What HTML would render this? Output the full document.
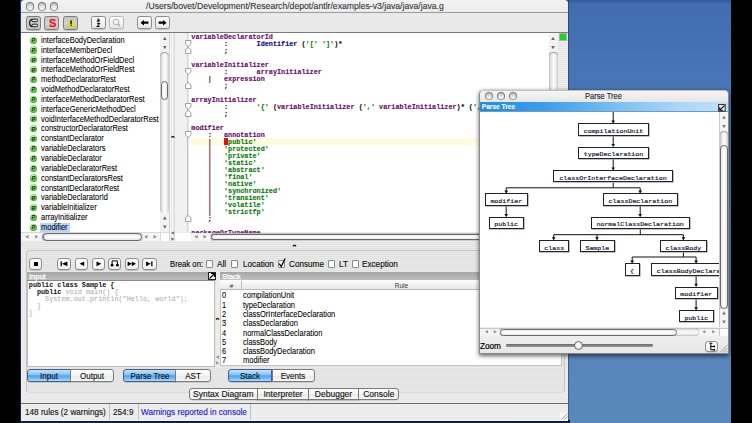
<!DOCTYPE html><html><head><meta charset="utf-8"><style>
*{margin:0;padding:0;box-sizing:border-box}
html,body{width:752px;height:423px;overflow:hidden;background:#000;position:relative;font-family:"Liberation Sans",sans-serif}
.a{position:absolute}
.t{position:absolute;white-space:pre;line-height:1}
.mono{font-family:"Liberation Mono",monospace}
.tl{position:absolute;width:8.4px;height:8.4px;border-radius:50%;border:1px solid #7c7c7c;border-bottom-color:#9a9a9a;background:linear-gradient(#bdbdbd,#d8d8d8 40%,#f4f4f4 75%,#fff)}
.tb{position:absolute;border:1px solid #8c8c8c;border-radius:2.5px;background:linear-gradient(#fdfdfd,#f2f2f2 60%,#e6e6e6);box-shadow:0 0.7px 0.5px rgba(0,0,0,.2)}
.tbp{position:absolute;border:1px solid #7c7c7c;border-radius:2.5px;background:linear-gradient(#c4c4c4,#d2d2d2 50%,#c0c0c0);box-shadow:0 0.7px 0.5px rgba(0,0,0,.2)}
.vtrack{position:absolute;background:linear-gradient(90deg,#c4c4c4,#e8e8e8 25%,#fcfcfc 50%,#f0f0f0 75%,#cfcfcf);box-shadow:inset 0 1.5px 1px -0.5px rgba(0,0,0,.35)}
.htrack{position:absolute;background:linear-gradient(#c4c4c4,#e8e8e8 25%,#fcfcfc 50%,#f0f0f0 75%,#cfcfcf);box-shadow:inset 0 0 1.2px rgba(0,0,0,.45)}
.thumb{position:absolute;border:1px solid #6a6a6a;border-radius:4px;background:linear-gradient(90deg,#eaeaea,#fff 50%,#e6e6e6)}
.hthumb{position:absolute;border:1px solid #6a6a6a;border-radius:4px;background:linear-gradient(#eaeaea,#fff 50%,#e6e6e6)}
.li{position:absolute;left:40.8px;font-size:8.6px;color:#000;white-space:pre;line-height:1;-webkit-text-stroke:0.08px #000;transform:scaleX(0.87);transform-origin:0 0}
.gi{position:absolute;left:30px;width:7.2px;height:7.2px;border-radius:50%;background:radial-gradient(circle at 45% 30%,#e0ffd0 0%,#7ee060 35%,#3cb82a 70%,#2a9a1c 100%)}
.btn{position:absolute;border:1px solid #8e8e8e;border-radius:3px;background:linear-gradient(#fff,#f0f0f0);box-shadow:0 0.6px 0.6px rgba(0,0,0,.25)}
.ui{position:absolute;white-space:pre;line-height:1;font-size:8.4px;color:#111;transform-origin:0 0}
.cb{position:absolute;width:7.4px;height:7.4px;border:1px solid #8a8a8a;border-radius:1px;background:linear-gradient(#f4f4f4,#fff)}
.seg{position:absolute;border:1px solid #7a7a7a;background:linear-gradient(#fdfdfd,#f4f4f4 50%,#e9e9e9 55%,#f8f8f8);box-shadow:0 0.6px 0.6px rgba(0,0,0,.2)}
.segb{position:absolute;border:1px solid #4a5f80;background:linear-gradient(#c4e2fb,#84c2f6 45%,#4aa4f2 52%,#6cbaf6 75%,#b0dcfc);box-shadow:0 0.6px 0.6px rgba(0,0,0,.25)}
.gi b{position:absolute;left:1.8px;top:0.6px;font:bold 5.5px "Liberation Sans";color:#111}
</style></head><body>
<div class="a" style="left:20px;top:0px;width:711px;height:423px;background:linear-gradient(#34589a 0px,#416cb0 4px,#4571b3 40px,#4a77b6 100px,#5381b9 250px,#5b88bb 423px)"></div>
<div class="a" style="left:20px;top:0px;width:1.2px;height:423px;background:linear-gradient(#203a70,#1a2c58 30%,#14224a)"></div>
<div class="a" style="left:20px;top:420px;width:550px;height:3px;background:linear-gradient(#000614 0%,#06112a 45%,#1c3564 100%)"></div>
<div class="a" style="left:568px;top:0px;width:1.2px;height:421px;background:linear-gradient(90deg,rgba(0,0,20,.5),rgba(0,0,20,.15))"></div>
<div class="a" style="left:21px;top:0px;width:547px;height:420.6px;background:repeating-linear-gradient(#ededed 0 1px,#e7e7e7 1px 2px);border-radius:4px 4px 0 0"></div>
<div class="a" style="left:21px;top:0px;width:547px;height:12.2px;background:repeating-linear-gradient(rgba(255,255,255,.25) 0 1px,rgba(0,0,0,0) 1px 2px),linear-gradient(#f0f0f0,#e8e8e8);border-radius:4.5px 4.5px 0 0"></div>
<div class="a" style="left:21px;top:12px;width:547px;height:1px;background:#9a9a9a"></div>
<div class="tl" style="left:25.7px;top:2.2px"></div>
<div class="tl" style="left:37.9px;top:2.2px"></div>
<div class="tl" style="left:50.099999999999994px;top:2.2px"></div>
<div class="t" style="left:146px;top:1.2px;font-size:9.8px;color:#333;-webkit-text-stroke-width:0.1px;transform:scaleX(0.882);transform-origin:0 0">/Users/bovet/Development/Research/depot/antlr/examples-v3/java/java/java.g</div>
<div class="a" style="left:21px;top:13px;width:547px;height:19px;background:repeating-linear-gradient(#ededed 0 1px,#e5e5e5 1px 2px)"></div>
<div class="a" style="left:21px;top:31.5px;width:547px;height:1.5px;background:#7a7a7a"></div>
<div class="tbp" style="left:26px;top:16px;width:15px;height:13.5px;"></div>
<svg class="a" style="left:26px;top:16px" width="15" height="14" viewBox="0 0 15 14"><rect x="5.8" y="3.2" width="5.9" height="2.5" rx="1.25" fill="#e8e8e8" stroke="#111" stroke-width="0.95"/><rect x="5.8" y="8.2" width="5.9" height="2.5" rx="1.25" fill="#e8e8e8" stroke="#111" stroke-width="0.95"/><path d="M6.3 3.3 Q3.6 3.7 3.6 6.95 Q3.6 10.2 6.3 10.6" fill="none" stroke="#111" stroke-width="1.1"/></svg>
<div class="tbp" style="left:44.3px;top:16px;width:15.2px;height:13.5px;"></div>
<div class="t" style="left:48.6px;top:17.2px;font:bold 10.6px 'Liberation Sans';color:#f00;transform:scaleX(1.05);transform-origin:0 0">S</div>
<div class="tbp" style="left:63px;top:16px;width:15px;height:13.5px;"></div>
<svg class="a" style="left:63px;top:16px" width="15" height="14" viewBox="0 0 15 14"><path d="M8.1 3.9 L12.5 10.4 H3.7 Z" fill="#f4f000" stroke="#a8a000" stroke-width="0.3"/><path d="M8.1 4.6 V8.4" stroke="#111" stroke-width="1.5"/><path d="M8.1 9 V10" stroke="#111" stroke-width="1.2"/></svg>
<div class="tb" style="left:90.8px;top:15.8px;width:15.2px;height:13.4px;"></div>
<svg class="a" style="left:0;top:0;overflow:visible" width="1" height="1"><path d="M97.2 19.1 H99.1 V21.8 H97.7 Q97.1 21.8 97.1 21.1 Q97.1 20.4 97.7 20.4 H99.1" fill="none" stroke="#111" stroke-width="0.95"/><path d="M97.1 23.5 H99.5 L97.2 26.4 H99.7" fill="none" stroke="#111" stroke-width="1.05"/></svg>
<div class="tb" style="left:109.2px;top:15.8px;width:15.2px;height:13.4px;border-color:#b8b8b8;box-shadow:0 0.7px 0.5px rgba(0,0,0,.1)"></div>
<svg class="a" style="left:109px;top:16px" width="15" height="14" viewBox="0 0 15 14"><circle cx="7" cy="6" r="2.8" fill="none" stroke="#b0b0b0" stroke-width="1"/><path d="M9 8 L11 10.3" stroke="#a8a8a8" stroke-width="1.4"/></svg>
<div class="tb" style="left:136.6px;top:15.8px;width:15.2px;height:13.4px;"></div>
<svg class="a" style="left:136.6px;top:15.8px" width="15" height="14" viewBox="0 0 15 14"><path d="M3.4 6.7 L7 3.9 V5.6 H11.4 V7.8 H7 V9.5 Z" fill="#000"/></svg>
<div class="tb" style="left:155px;top:15.8px;width:15.2px;height:13.4px;"></div>
<svg class="a" style="left:155px;top:15.8px" width="15" height="14" viewBox="0 0 15 14"><path d="M11.6 6.7 L8 3.9 V5.6 H3.6 V7.8 H8 V9.5 Z" fill="#000"/></svg>
<div class="a" style="left:21px;top:33px;width:139.5px;height:199px;background:#fff"></div>
<div class="gi" style="top:36.50px"><b>P</b></div>
<div class="li" style="top:35.80px">interfaceBodyDeclaration</div>
<div class="gi" style="top:46.35px"><b>P</b></div>
<div class="li" style="top:45.65px">interfaceMemberDecl</div>
<div class="gi" style="top:56.20px"><b>P</b></div>
<div class="li" style="top:55.50px">interfaceMethodOrFieldDecl</div>
<div class="gi" style="top:66.05px"><b>P</b></div>
<div class="li" style="top:65.35px">interfaceMethodOrFieldRest</div>
<div class="gi" style="top:75.90px"><b>P</b></div>
<div class="li" style="top:75.20px">methodDeclaratorRest</div>
<div class="gi" style="top:85.75px"><b>P</b></div>
<div class="li" style="top:85.05px">voidMethodDeclaratorRest</div>
<div class="gi" style="top:95.60px"><b>P</b></div>
<div class="li" style="top:94.90px">interfaceMethodDeclaratorRest</div>
<div class="gi" style="top:105.45px"><b>P</b></div>
<div class="li" style="top:104.75px">interfaceGenericMethodDecl</div>
<div class="gi" style="top:115.30px"><b>P</b></div>
<div class="li" style="top:114.60px">voidInterfaceMethodDeclaratorRest</div>
<div class="gi" style="top:125.15px"><b>P</b></div>
<div class="li" style="top:124.45px">constructorDeclaratorRest</div>
<div class="gi" style="top:135.00px"><b>P</b></div>
<div class="li" style="top:134.30px">constantDeclarator</div>
<div class="gi" style="top:144.85px"><b>P</b></div>
<div class="li" style="top:144.15px">variableDeclarators</div>
<div class="gi" style="top:154.70px"><b>P</b></div>
<div class="li" style="top:154.00px">variableDeclarator</div>
<div class="gi" style="top:164.55px"><b>P</b></div>
<div class="li" style="top:163.85px">variableDeclaratorRest</div>
<div class="gi" style="top:174.40px"><b>P</b></div>
<div class="li" style="top:173.70px">constantDeclaratorsRest</div>
<div class="gi" style="top:184.25px"><b>P</b></div>
<div class="li" style="top:183.55px">constantDeclaratorRest</div>
<div class="gi" style="top:194.10px"><b>P</b></div>
<div class="li" style="top:193.40px">variableDeclaratorId</div>
<div class="gi" style="top:203.95px"><b>P</b></div>
<div class="li" style="top:203.25px">variableInitializer</div>
<div class="gi" style="top:213.80px"><b>P</b></div>
<div class="li" style="top:213.10px">arrayInitializer</div>
<div class="a" style="left:40px;top:222.55px;width:30px;height:9.6px;background:#b5d5ff"></div>
<div class="gi" style="top:223.65px"><b>P</b></div>
<div class="li" style="top:222.95px">modifier</div>
<div class="a" style="left:160.4px;top:33px;width:8.8px;height:199px;background:#f2f2f2"></div>
<svg class="a" style="left:0;top:0;overflow:visible" width="1" height="1"><path d="M163.00 39.94 L166.60 39.94 L164.80 36.70 Z" fill="#666"/></svg>
<svg class="a" style="left:0;top:0;overflow:visible" width="1" height="1"><path d="M163.00 45.96 L166.60 45.96 L164.80 49.20 Z" fill="#666"/></svg>
<div class="vtrack" style="left:160.4px;top:52px;width:8.8px;height:161.5px;border-radius:4.4px"></div>
<div class="thumb" style="left:161.4px;top:80.5px;width:7.1px;height:19px"></div>
<svg class="a" style="left:0;top:0;overflow:visible" width="1" height="1"><path d="M163.00 219.44 L166.60 219.44 L164.80 216.20 Z" fill="#666"/></svg>
<svg class="a" style="left:0;top:0;overflow:visible" width="1" height="1"><path d="M163.00 225.56 L166.60 225.56 L164.80 228.80 Z" fill="#666"/></svg>
<div class="a" style="left:21px;top:232px;width:148.2px;height:9px;background:#f4f4f4;border-top:0.8px solid #d8d8d8"></div>
<svg class="a" style="left:0;top:0;overflow:visible" width="1" height="1"><path d="M28.44 235.00 L28.44 238.60 L25.20 236.80 Z" fill="#888"/></svg>
<svg class="a" style="left:0;top:0;overflow:visible" width="1" height="1"><path d="M35.16 235.00 L35.16 238.60 L38.40 236.80 Z" fill="#888"/></svg>
<div class="htrack" style="left:42px;top:233px;width:100.5px;height:7.9px;border-radius:4px"></div>
<div class="hthumb" style="left:42.6px;top:233px;width:99px;height:7.9px;box-shadow:-1.5px 0 0 -0.5px #888"></div>
<svg class="a" style="left:0;top:0;overflow:visible" width="1" height="1"><path d="M147.44 235.00 L147.44 238.60 L144.20 236.80 Z" fill="#888"/></svg>
<svg class="a" style="left:0;top:0;overflow:visible" width="1" height="1"><path d="M153.56 235.00 L153.56 238.60 L156.80 236.80 Z" fill="#888"/></svg>
<div class="a" style="left:160.4px;top:232px;width:8.8px;height:9px;background:#fff;border-left:0.8px solid #d8d8d8;border-top:0.8px solid #d8d8d8"></div>
<div class="a" style="left:169.2px;top:33px;width:6px;height:208px;background:repeating-linear-gradient(90deg,#f6f6f6 0 1px,#e8e8e8 1px 2px);border-left:0.8px solid #d4d4d4;border-right:0.6px solid #dcdcdc"></div>
<svg class="a" style="left:0;top:0;overflow:visible" width="1" height="1"><path d="M171.40 137.60 Q172.90 135.20 174.40 137.60" fill="none" stroke="#111" stroke-width="1.3"/></svg>
<svg class="a" style="left:0;top:0;overflow:visible" width="1" height="1"><path d="M174.14 231.20 L174.14 234.80 L170.90 233.00 Z" fill="#777"/></svg>
<svg class="a" style="left:0;top:0;overflow:visible" width="1" height="1"><path d="M171.26 237.20 L171.26 240.80 L174.50 239.00 Z" fill="#777"/></svg>
<div class="a" style="left:175.2px;top:33px;width:12.3px;height:199px;background:#f1f1f1"></div>
<div class="a" style="left:187.3px;top:33px;width:1px;height:199px;background:#d6d6d6"></div>
<div class="a" style="left:188.5px;top:33px;width:360px;height:199px;background:#fff"></div>
<div class="a" style="left:190.5px;top:138.1px;width:357.5px;height:6.8px;background:#fdfce0"></div>
<div class="a" style="left:224px;top:138.1px;width:4px;height:6.6px;background:#ee0a0a"></div>
<div class="t mono" style="left:191.3px;top:34.0px;font-size:6.8px;line-height:6.98px;font-weight:bold;-webkit-text-stroke-width:0.15px;color:#111"><span style="color:#6e0e70">variableDeclaratorId</span>
        <span style="color:#111">:</span>       <span style="color:#101080">Identifier</span> <span style="color:#111">(</span><span style="color:#0b7d0b">'['</span> <span style="color:#0b7d0b">']'</span><span style="color:#111">)*</span>
        <span style="color:#111">;</span>

<span style="color:#6e0e70">variableInitializer</span>
        <span style="color:#111">:</span>       <span style="color:#6e0e70">arrayInitializer</span>
    <span style="color:#7a2a44">|</span>   <span style="color:#6e0e70">expression</span>
        <span style="color:#111">;</span>

<span style="color:#6e0e70">arrayInitializer</span>
        <span style="color:#111">:</span>       <span style="color:#0b7d0b">'{'</span> <span style="color:#111">(</span><span style="color:#6e0e70">variableInitializer</span> <span style="color:#111">(</span><span style="color:#0b7d0b">','</span> <span style="color:#6e0e70">variableInitializer</span><span style="color:#111">)*</span> <span style="color:#111">(</span><span style="color:#0b7d0b">','</span><span style="color:#111">)?</span> <span style="color:#111">)?</span> <span style="color:#0b7d0b">'}'</span>
        <span style="color:#111">;</span>

<span style="color:#6e0e70">modifier</span>
    <span style="color:#111">:</span>   <span style="color:#6e0e70">annotation</span>
    <span style="color:#7a2a44">|</span>   <span style="color:#0b7d0b">'public'</span>
    <span style="color:#7a2a44">|</span>   <span style="color:#0b7d0b">'protected'</span>
    <span style="color:#7a2a44">|</span>   <span style="color:#0b7d0b">'private'</span>
    <span style="color:#7a2a44">|</span>   <span style="color:#0b7d0b">'static'</span>
    <span style="color:#7a2a44">|</span>   <span style="color:#0b7d0b">'abstract'</span>
    <span style="color:#7a2a44">|</span>   <span style="color:#0b7d0b">'final'</span>
    <span style="color:#7a2a44">|</span>   <span style="color:#0b7d0b">'native'</span>
    <span style="color:#7a2a44">|</span>   <span style="color:#0b7d0b">'synchronized'</span>
    <span style="color:#7a2a44">|</span>   <span style="color:#0b7d0b">'transient'</span>
    <span style="color:#7a2a44">|</span>   <span style="color:#0b7d0b">'volatile'</span>
    <span style="color:#7a2a44">|</span>   <span style="color:#0b7d0b">'strictfp'</span>
    <span style="color:#111">;</span>

<span style="color:#6e0e70">packageOrTypeName</span></div>
<div class="a" style="left:187.3px;top:45.85px;width:0.8px;height:2.25px;background:#c0c0c0"></div>
<svg class="a" style="left:184.5px;top:39.85px" width="7" height="7" viewBox="0 0 7 7"><path d="M0.5 0.5 H6 V3.9 L3.25 6.5 L0.5 3.9 Z" fill="#fff" stroke="#8c8c8c" stroke-width="0.8"/></svg>
<svg class="a" style="left:184.5px;top:47.10px" width="7" height="7" viewBox="0 0 7 7"><path d="M0.5 6.5 H6 V2.8 L3.25 0.5 L0.5 2.8 Z" fill="#fff" stroke="#8c8c8c" stroke-width="0.8"/></svg>
<div class="a" style="left:187.3px;top:73.77000000000001px;width:0.8px;height:9.22999999999999px;background:#c0c0c0"></div>
<svg class="a" style="left:184.5px;top:67.77px" width="7" height="7" viewBox="0 0 7 7"><path d="M0.5 0.5 H6 V3.9 L3.25 6.5 L0.5 3.9 Z" fill="#fff" stroke="#8c8c8c" stroke-width="0.8"/></svg>
<svg class="a" style="left:184.5px;top:82.00px" width="7" height="7" viewBox="0 0 7 7"><path d="M0.5 6.5 H6 V2.8 L3.25 0.5 L0.5 2.8 Z" fill="#fff" stroke="#8c8c8c" stroke-width="0.8"/></svg>
<div class="a" style="left:187.3px;top:108.67000000000002px;width:0.8px;height:2.249999999999986px;background:#c0c0c0"></div>
<svg class="a" style="left:184.5px;top:102.67px" width="7" height="7" viewBox="0 0 7 7"><path d="M0.5 0.5 H6 V3.9 L3.25 6.5 L0.5 3.9 Z" fill="#fff" stroke="#8c8c8c" stroke-width="0.8"/></svg>
<svg class="a" style="left:184.5px;top:109.92px" width="7" height="7" viewBox="0 0 7 7"><path d="M0.5 6.5 H6 V2.8 L3.25 0.5 L0.5 2.8 Z" fill="#fff" stroke="#8c8c8c" stroke-width="0.8"/></svg>
<div class="a" style="left:187.3px;top:136.59px;width:0.8px;height:79.03px;background:#c0c0c0"></div>
<svg class="a" style="left:184.5px;top:130.59px" width="7" height="7" viewBox="0 0 7 7"><path d="M0.5 0.5 H6 V3.9 L3.25 6.5 L0.5 3.9 Z" fill="#fff" stroke="#8c8c8c" stroke-width="0.8"/></svg>
<svg class="a" style="left:184.5px;top:214.62px" width="7" height="7" viewBox="0 0 7 7"><path d="M0.5 6.5 H6 V2.8 L3.25 0.5 L0.5 2.8 Z" fill="#fff" stroke="#8c8c8c" stroke-width="0.8"/></svg>
<div class="a" style="left:548.5px;top:33px;width:9.2px;height:199px;background:#f2f2f2"></div>
<svg class="a" style="left:0;top:0;overflow:visible" width="1" height="1"><path d="M551.20 39.94 L554.80 39.94 L553.00 36.70 Z" fill="#666"/></svg>
<svg class="a" style="left:0;top:0;overflow:visible" width="1" height="1"><path d="M551.20 45.96 L554.80 45.96 L553.00 49.20 Z" fill="#666"/></svg>
<div class="vtrack" style="left:548.5px;top:52px;width:9.2px;height:180px;border-radius:4px 4px 0 0"></div>
<div class="a" style="left:557.7px;top:33px;width:10.3px;height:208px;background:repeating-linear-gradient(#f0f0f0 0 1px,#e4e4e4 1px 2px)"></div>
<div class="a" style="left:559px;top:33.2px;width:8px;height:7.6px;background:#10e010;border:1px solid #c8a0c8"></div>
<div class="a" style="left:188.5px;top:232.9px;width:369.2px;height:8.1px;background:#f4f4f4"></div>
<div class="a" style="left:175.2px;top:232.9px;width:16px;height:8.1px;background:#fff"></div>
<svg class="a" style="left:0;top:0;overflow:visible" width="1" height="1"><path d="M197.54 235.00 L197.54 238.60 L194.30 236.80 Z" fill="#888"/></svg>
<svg class="a" style="left:0;top:0;overflow:visible" width="1" height="1"><path d="M203.46 235.00 L203.46 238.60 L206.70 236.80 Z" fill="#888"/></svg>
<div class="htrack" style="left:210px;top:233px;width:347px;height:7.6px;border-radius:4px 0 0 4px"></div>
<div class="hthumb" style="left:211px;top:233.5px;width:346px;height:6.8px;border-right:none;border-radius:4px 0 0 4px"></div>
<div class="a" style="left:21px;top:241px;width:547px;height:9px;background:repeating-linear-gradient(#ececec 0 1px,#e2e2e2 1px 2px)"></div>
<svg class="a" style="left:0;top:0;overflow:visible" width="1" height="1"><path d="M293.00 246.30 Q294.50 243.90 296.00 246.30" fill="none" stroke="#111" stroke-width="1.3"/></svg>
<div class="a" style="left:25.6px;top:250.4px;width:539px;height:142.2px;border:1px solid #c4c4c4;border-bottom-color:#dcdcdc;border-radius:4px;background:repeating-linear-gradient(#e8e8e8 0 1px,#e2e2e2 1px 2px)"></div>
<div class="btn" style="left:29.2px;top:258.3px;width:13px;height:11.4px;"></div>
<div class="a" style="left:33.5px;top:261.7px;width:4.4px;height:4.3px;background:#000"></div>
<div class="btn" style="left:57.3px;top:258.3px;width:13.600000000000009px;height:11.4px;"></div>
<div class="btn" style="left:74.7px;top:258.3px;width:13.299999999999997px;height:11.4px;"></div>
<div class="btn" style="left:91.6px;top:258.3px;width:13.600000000000009px;height:11.4px;"></div>
<div class="btn" style="left:108.3px;top:258.3px;width:13.200000000000003px;height:11.4px;"></div>
<div class="btn" style="left:124.9px;top:258.3px;width:13.699999999999989px;height:11.4px;"></div>
<div class="btn" style="left:142.1px;top:258.3px;width:14.700000000000017px;height:11.4px;"></div>
<svg class="a" style="left:57.3px;top:258.3px" width="14" height="12" viewBox="0 0 14 12"><rect x="3.6" y="3.4" width="1.3" height="4.8" fill="#000"/><path d="M10.4 3.4 V8.2 L4.9 5.8 Z" fill="#000"/></svg>
<svg class="a" style="left:74.7px;top:258.3px" width="14" height="12" viewBox="0 0 14 12"><path d="M9.2 3.6 V8.0 L4.6 5.8 Z" fill="#000"/></svg>
<svg class="a" style="left:91.6px;top:258.3px" width="14" height="12" viewBox="0 0 14 12"><path d="M4.5 3.4 V8.2 L9.3 5.8 Z" fill="#000"/></svg>
<svg class="a" style="left:108.3px;top:258.3px" width="14" height="12" viewBox="0 0 14 12"><path d="M4.1 6.9 V2.9 H9.4 V6.9" fill="none" stroke="#000" stroke-width="1"/><circle cx="4.1" cy="7.2" r="1.4" fill="#000"/><circle cx="9.4" cy="7.2" r="1.4" fill="#000"/></svg>
<svg class="a" style="left:124.9px;top:258.3px" width="14" height="12" viewBox="0 0 14 12"><path d="M2.6 3.4 V8.2 L6.8 5.8 Z M6.8 3.4 V8.2 L11 5.8 Z" fill="#000"/></svg>
<svg class="a" style="left:142.1px;top:258.3px" width="15" height="12" viewBox="0 0 15 12"><path d="M4 3.4 V8.2 L8.8 5.8 Z" fill="#000"/><rect x="9.2" y="3.4" width="1.3" height="4.8" fill="#000"/></svg>
<div class="t" style="left:170px;top:259.7px;font-size:8.6px;color:#111;-webkit-text-stroke-width:0.15px;transform:scaleX(0.9);transform-origin:0 0">Break on:</div>
<div class="cb" style="left:206px;top:260.3px;width:7.4px;height:7.4px;"></div>
<div class="t" style="left:217.2px;top:259.7px;font-size:8.6px;color:#111;-webkit-text-stroke-width:0.15px;transform:scaleX(0.95);transform-origin:0 0">All</div>
<div class="cb" style="left:230.9px;top:260.3px;width:7.4px;height:7.4px;"></div>
<div class="t" style="left:242.8px;top:259.7px;font-size:8.6px;color:#111;-webkit-text-stroke-width:0.15px;transform:scaleX(0.95);transform-origin:0 0">Location</div>
<div class="cb" style="left:277.8px;top:260.3px;width:7.4px;height:7.4px;"></div>
<svg class="a" style="left:277px;top:256.5px" width="10" height="11" viewBox="0 0 10 11"><path d="M2.2 6.6 L4.2 9.6 L8.2 1.5" fill="none" stroke="#000" stroke-width="1.2"/></svg>
<div class="t" style="left:288.7px;top:259.7px;font-size:8.6px;color:#111;-webkit-text-stroke-width:0.15px;transform:scaleX(0.95);transform-origin:0 0">Consume</div>
<div class="cb" style="left:327.7px;top:260.3px;width:7.4px;height:7.4px;"></div>
<div class="t" style="left:338.5px;top:259.7px;font-size:8.6px;color:#111;-webkit-text-stroke-width:0.15px;transform:scaleX(0.95);transform-origin:0 0">LT</div>
<div class="cb" style="left:351.5px;top:260.3px;width:7.4px;height:7.4px;"></div>
<div class="t" style="left:362.3px;top:259.7px;font-size:8.6px;color:#111;-webkit-text-stroke-width:0.15px;transform:scaleX(0.95);transform-origin:0 0">Exception</div>
<div class="a" style="left:27.4px;top:272px;width:188.1px;height:94.6px;background:#fff;border:1px solid #bdbdbd"></div>
<div class="a" style="left:27.4px;top:272.3px;width:188.1px;height:8.3px;background:linear-gradient(#a6a6a6,#bdbdbd);border-bottom:0.8px solid #8a8a8a"></div>
<div class="t" style="left:28.6px;top:272.7px;font-size:7.9px;color:#fff;-webkit-text-stroke-width:0.25px;transform:scaleX(0.95);transform-origin:0 0">Input</div>
<svg class="a" style="left:207.5px;top:272.2px" width="8" height="8" viewBox="0 0 8 8"><rect x="0.5" y="0.5" width="7" height="7" fill="#fff" stroke="#222" stroke-width="1"/><path d="M1.5 6.5 L6.5 1.5 M3 1.5 H6.5 V5" fill="none" stroke="#000" stroke-width="1.2"/></svg>
<div class="t mono" style="left:28.8px;top:282.3px;font-size:6.8px;line-height:6.95px;font-weight:bold"><span style="color:#111">public class Sample {</span>
<span style="color:#111">  public</span><span style="color:#a8a8a8;font-weight:normal"> void main() {</span>
<span style="color:#a8a8a8;font-weight:normal">    System.out.println("Hello, world");</span>
<span style="color:#a8a8a8;font-weight:normal">  }</span>
<span style="color:#a8a8a8;font-weight:normal">}</span></div>
<div class="a" style="left:215.5px;top:272px;width:4.5px;height:94.6px;background:#ececec"></div>
<svg class="a" style="left:0;top:0;overflow:visible" width="1" height="1"><path d="M216.10 319.60 Q217.60 317.20 219.10 319.60" fill="none" stroke="#111" stroke-width="1.3"/></svg>
<svg class="a" style="left:0;top:0;overflow:visible" width="1" height="1"><path d="M218.94 355.30 L218.94 358.90 L215.70 357.10 Z" fill="#999"/></svg>
<svg class="a" style="left:0;top:0;overflow:visible" width="1" height="1"><path d="M216.06 361.10 L216.06 364.70 L219.30 362.90 Z" fill="#999"/></svg>
<div class="a" style="left:220px;top:272px;width:342px;height:94px;background:#fff;border:1px solid #c4c4c4"></div>
<div class="a" style="left:220px;top:272.3px;width:342px;height:8.3px;background:linear-gradient(#a6a6a6,#bdbdbd);border-bottom:0.8px solid #8a8a8a"></div>
<div class="t" style="left:221.5px;top:272.7px;font-size:7.9px;color:#fff;-webkit-text-stroke-width:0.25px;transform:scaleX(0.95);transform-origin:0 0">Stack</div>
<div class="a" style="left:220px;top:280px;width:342px;height:9.8px;background:linear-gradient(#fdfdfd,#e8e8e8);border-bottom:1px solid #b8b8b8"></div>
<div class="a" style="left:241.3px;top:280.5px;width:0.8px;height:9px;background:#c0c0c0"></div>
<div class="t" style="left:229.8px;top:283px;font-size:6.2px;color:#333">#</div>
<div class="t" style="left:394.8px;top:283.1px;font-size:6.4px;color:#333">Rule</div>
<div class="li" style="left:222.3px;top:291.30px">0</div>
<div class="li" style="left:242.6px;top:291.30px">compilationUnit</div>
<div class="li" style="left:222.3px;top:300.61px">1</div>
<div class="li" style="left:242.6px;top:300.61px">typeDeclaration</div>
<div class="li" style="left:222.3px;top:309.92px">2</div>
<div class="li" style="left:242.6px;top:309.92px">classOrInterfaceDeclaration</div>
<div class="li" style="left:222.3px;top:319.23px">3</div>
<div class="li" style="left:242.6px;top:319.23px">classDeclaration</div>
<div class="li" style="left:222.3px;top:328.54px">4</div>
<div class="li" style="left:242.6px;top:328.54px">normalClassDeclaration</div>
<div class="li" style="left:222.3px;top:337.85px">5</div>
<div class="li" style="left:242.6px;top:337.85px">classBody</div>
<div class="li" style="left:222.3px;top:347.16px">6</div>
<div class="li" style="left:242.6px;top:347.16px">classBodyDeclaration</div>
<div class="li" style="left:222.3px;top:356.47px">7</div>
<div class="li" style="left:242.6px;top:356.47px">modifier</div>
<div class="segb" style="left:27.4px;top:369.3px;width:43.4px;height:12.5px;border-radius:3px 0 0 3px"></div>
<div class="t" style="left:49.099999999999994px;top:371.5px;font-size:8.6px;color:#111;-webkit-text-stroke-width:0.12px;transform:translateX(-50%) scaleX(0.93);transform-origin:50% 0">Input</div>
<div class="seg" style="left:70.4px;top:369.3px;width:44.0px;height:12.5px;border-radius:0 3px 3px 0"></div>
<div class="t" style="left:92.4px;top:371.5px;font-size:8.6px;color:#111;-webkit-text-stroke-width:0.12px;transform:translateX(-50%) scaleX(0.93);transform-origin:50% 0">Output</div>
<div class="segb" style="left:123.2px;top:369.3px;width:52.60000000000001px;height:12.5px;border-radius:3px 0 0 3px"></div>
<div class="t" style="left:149.5px;top:371.5px;font-size:8.6px;color:#111;-webkit-text-stroke-width:0.12px;transform:translateX(-50%) scaleX(0.93);transform-origin:50% 0">Parse Tree</div>
<div class="seg" style="left:175.4px;top:369.3px;width:36.099999999999994px;height:12.5px;border-radius:0 3px 3px 0"></div>
<div class="t" style="left:193.45px;top:371.5px;font-size:8.6px;color:#111;-webkit-text-stroke-width:0.12px;transform:translateX(-50%) scaleX(0.93);transform-origin:50% 0">AST</div>
<div class="segb" style="left:228.3px;top:369.3px;width:44.099999999999966px;height:12.5px;border-radius:3px 0 0 3px"></div>
<div class="t" style="left:250.35px;top:371.5px;font-size:8.6px;color:#111;-webkit-text-stroke-width:0.12px;transform:translateX(-50%) scaleX(0.93);transform-origin:50% 0">Stack</div>
<div class="seg" style="left:272px;top:369.3px;width:42.60000000000002px;height:12.5px;border-radius:0 3px 3px 0"></div>
<div class="t" style="left:293.3px;top:371.5px;font-size:8.6px;color:#111;-webkit-text-stroke-width:0.12px;transform:translateX(-50%) scaleX(0.93);transform-origin:50% 0">Events</div>
<div class="seg" style="left:188.8px;top:388.4px;width:69.0px;height:11.7px;border-radius:3px 0 0 3px"></div>
<div class="t" style="left:223.3px;top:389.6px;font-size:8.5px;color:#111;-webkit-text-stroke-width:0.12px;transform:translateX(-50%);">Syntax Diagram</div>
<div class="seg" style="left:257.4px;top:388.4px;width:51.400000000000034px;height:11.7px;"></div>
<div class="t" style="left:283.1px;top:389.6px;font-size:8.5px;color:#111;-webkit-text-stroke-width:0.12px;transform:translateX(-50%);">Interpreter</div>
<div class="seg" style="left:308.4px;top:388.4px;width:50.200000000000045px;height:11.7px;"></div>
<div class="t" style="left:333.5px;top:389.6px;font-size:8.5px;color:#111;-webkit-text-stroke-width:0.12px;transform:translateX(-50%);">Debugger</div>
<div class="seg" style="left:358.2px;top:388.4px;width:41.19999999999999px;height:11.7px;border-radius:0 3px 3px 0"></div>
<div class="t" style="left:378.79999999999995px;top:389.6px;font-size:8.5px;color:#111;-webkit-text-stroke-width:0.12px;transform:translateX(-50%);">Console</div>
<div class="a" style="left:21px;top:403px;width:547px;height:1px;background:#6a6a6a"></div>
<div class="a" style="left:21px;top:404px;width:547px;height:16.6px;background:repeating-linear-gradient(#efefef 0 1px,#e9e9e9 1px 2px);border-bottom:1.2px solid #fafafa"></div>
<div class="t" style="left:24.6px;top:407.9px;font-size:8.6px;color:#111;-webkit-text-stroke-width:0.12px;transform:scaleX(0.95);transform-origin:0 0">148 rules (2 warnings)</div>
<div class="a" style="left:108.5px;top:404px;width:0.8px;height:16px;background:#c4c4c4"></div>
<div class="t" style="left:113px;top:407.9px;font-size:8.6px;color:#111;-webkit-text-stroke-width:0.12px;transform:scaleX(0.95);transform-origin:0 0">254:9</div>
<div class="a" style="left:137.5px;top:404px;width:0.8px;height:16px;background:#c4c4c4"></div>
<div class="t" style="left:140.5px;top:407.9px;font-size:8.6px;color:#1818d0;-webkit-text-stroke-width:0.12px;transform:scaleX(0.95);transform-origin:0 0">Warnings reported in console</div>
<div class="a" style="left:250.2px;top:404px;width:0.8px;height:16px;background:#c4c4c4"></div>
<div class="a" style="left:560.4px;top:413px;width:7.6px;height:7.6px;background:#f8f8f8"></div>
<svg class="a" style="left:558px;top:410px" width="10" height="10.6" viewBox="0 0 10 10.6"><path d="M9.5 3.5 L3.5 9.5 M9.5 6.5 L6.5 9.5" stroke="#8a8a8a" stroke-width="0.8"/></svg>
<div class="a" style="left:479.3px;top:89.5px;width:250px;height:264.2px;border-radius:4.5px 4.5px 0 0;box-shadow:0 1.5px 4px rgba(0,0,0,.6);background:#ececec;border:1px solid #8a8a8a;border-top-color:#c0c0c0"></div>
<div class="a" style="left:480.3px;top:90.5px;width:248px;height:11.5px;background:linear-gradient(#f6f6f6,#e6e6e6);border-radius:4px 4px 0 0"></div>
<div class="a" style="left:480.3px;top:101.6px;width:248px;height:0.8px;background:#a8a8a8"></div>
<div class="tl" style="left:484.8px;top:92.4px;width:8px;height:8px"></div>
<div class="tl" style="left:496.9px;top:92.4px;width:8px;height:8px"></div>
<div class="tl" style="left:509px;top:92.4px;width:8px;height:8px"></div>
<div class="t" style="left:584.5px;top:91.9px;font-size:8.4px;color:#222;-webkit-text-stroke-width:0.12px;transform:scaleX(0.9);transform-origin:0 0">Parse Tree</div>
<div class="a" style="left:480.3px;top:102.4px;width:248px;height:9.3px;background:linear-gradient(90deg,#1e8ae6 0%,#3c9cea 25%,#7cbff2 55%,#aad6f8 80%,#bfe2fb 100%);border-bottom:0.6px solid #6a9cc8"></div>
<div class="t" style="left:481.8px;top:103.1px;font:bold 6.6px 'Liberation Sans';color:#fff;-webkit-text-stroke:0.1px #fff">Parse Tree</div>
<svg class="a" style="left:717.8px;top:103.8px" width="8" height="8" viewBox="0 0 8 8"><rect x="0.6" y="0.6" width="6.6" height="6.6" fill="#fff" stroke="#333" stroke-width="1.1"/><path d="M1.6 6.4 L6.4 1.6 M1.8 3.2 V6.2 H4.8" fill="none" stroke="#000" stroke-width="1.1"/></svg>
<div class="a" style="left:480.3px;top:111.7px;width:238.9px;height:215.8px;background:#fff"></div>
<div class="a" style="left:719.2px;top:111.7px;width:9.3px;height:215.8px;background:#f4f4f4;border-left:0.8px solid #c8c8c8"></div>
<div class="vtrack" style="left:719.8px;top:131.3px;width:8.6px;height:178px;border-radius:4px 4px 0 0"></div>
<div class="thumb" style="left:720.2px;top:144.7px;width:8px;height:164.3px"></div>
<svg class="a" style="left:0;top:0;overflow:visible" width="1" height="1"><path d="M722.20 118.84 L725.80 118.84 L724.00 115.60 Z" fill="#777"/></svg>
<svg class="a" style="left:0;top:0;overflow:visible" width="1" height="1"><path d="M722.20 124.96 L725.80 124.96 L724.00 128.20 Z" fill="#777"/></svg>
<svg class="a" style="left:0;top:0;overflow:visible" width="1" height="1"><path d="M722.20 314.44 L725.80 314.44 L724.00 311.20 Z" fill="#777"/></svg>
<svg class="a" style="left:0;top:0;overflow:visible" width="1" height="1"><path d="M722.20 320.56 L725.80 320.56 L724.00 323.80 Z" fill="#777"/></svg>
<div class="a" style="left:480.3px;top:327.5px;width:238.9px;height:8.5px;background:#f4f4f4;border-top:0.8px solid #c8c8c8"></div>
<svg class="a" style="left:0;top:0;overflow:visible" width="1" height="1"><path d="M488.04 329.90 L488.04 333.50 L484.80 331.70 Z" fill="#999"/></svg>
<svg class="a" style="left:0;top:0;overflow:visible" width="1" height="1"><path d="M493.76 329.90 L493.76 333.50 L497.00 331.70 Z" fill="#999"/></svg>
<div class="htrack" style="left:499px;top:328.2px;width:200px;height:7.6px;border-radius:4px"></div>
<div class="hthumb" style="left:499.8px;top:328.6px;width:177.5px;height:7px"></div>
<svg class="a" style="left:0;top:0;overflow:visible" width="1" height="1"><path d="M705.44 329.90 L705.44 333.50 L702.20 331.70 Z" fill="#999"/></svg>
<svg class="a" style="left:0;top:0;overflow:visible" width="1" height="1"><path d="M712.06 329.90 L712.06 333.50 L715.30 331.70 Z" fill="#999"/></svg>
<div class="a" style="left:719.2px;top:327.5px;width:9.3px;height:8.5px;background:#fff;border-top:0.8px solid #c8c8c8;border-left:0.8px solid #c8c8c8"></div>
<div class="a" style="left:480.3px;top:336px;width:248px;height:17.2px;background:linear-gradient(#efefef,#e6e6e6)"></div>
<div class="t" style="left:479.8px;top:341.8px;font-size:8.8px;color:#000;-webkit-text-stroke-width:0.2px;transform:scaleX(0.93);transform-origin:0 0">Zoom</div>
<div class="a" style="left:505.5px;top:344.2px;width:147px;height:2.6px;border-radius:1.3px;background:linear-gradient(#6a6a6a,#9a9a9a);"></div>
<div class="a" style="left:573.8px;top:340.9px;width:9.4px;height:9.4px;border-radius:50%;border:1px solid #6a6a6a;background:radial-gradient(circle at 50% 40%,#fff,#e8e8e8 70%,#cfcfcf)"></div>
<div class="btn" style="left:704.7px;top:340.7px;width:13px;height:11.1px;"></div>
<svg class="a" style="left:704.7px;top:340.7px" width="13" height="12" viewBox="0 0 13 12"><path d="M4.3 2.2 H7.4 M5.8 2.2 V8.8 M5.8 5.5 H8.4 M5.8 8.8 H8.4" fill="none" stroke="#000" stroke-width="1"/><rect x="8.2" y="4.7" width="1.8" height="1.6" fill="#000"/><rect x="8.2" y="8" width="1.8" height="1.6" fill="#000"/></svg>
<svg class="a" style="left:717px;top:342px" width="11" height="11" viewBox="0 0 11 11"><path d="M10.5 3 L3 10.5 M10.5 6 L6 10.5 M10.5 9 L9 10.5" stroke="#8a8a8a" stroke-width="0.8"/></svg>
<div class="a" style="left:480.3px;top:111.7px;width:238.9px;height:215.8px;overflow:hidden">
<svg class="a" style="left:0;top:0" width="239" height="216" viewBox="0 0 239 216"><path d="M133.2 0.0 L133.2 10.2" stroke="#111" stroke-width="1" fill="none"/><path d="M131.39999999999998 8.5 L135.0 8.5 L133.2 11.7 Z" fill="#111"/><path d="M133.2 23.9 L133.2 33.6" stroke="#111" stroke-width="1" fill="none"/><path d="M131.39999999999998 31.900000000000002 L135.0 31.900000000000002 L133.2 35.1 Z" fill="#111"/><path d="M133.2 47.2 L133.2 57.1" stroke="#111" stroke-width="1" fill="none"/><path d="M131.39999999999998 55.4 L135.0 55.4 L133.2 58.6 Z" fill="#111"/><path d="M133.2 70.7 L133.2 75.8" stroke="#111" stroke-width="1" fill="none"/><path d="M26.2 75.8 L160.2 75.8" stroke="#111" stroke-width="1" fill="none"/><path d="M26.2 75.8 L26.2 80.3" stroke="#111" stroke-width="1" fill="none"/><path d="M24.4 78.6 L28.0 78.6 L26.2 81.8 Z" fill="#111"/><path d="M160.2 75.8 L160.2 80.3" stroke="#111" stroke-width="1" fill="none"/><path d="M158.39999999999998 78.6 L162.0 78.6 L160.2 81.8 Z" fill="#111"/><path d="M26.2 93.7 L26.2 103.8" stroke="#111" stroke-width="1" fill="none"/><path d="M24.4 102.1 L28.0 102.1 L26.2 105.3 Z" fill="#111"/><path d="M160.2 93.7 L160.2 103.8" stroke="#111" stroke-width="1" fill="none"/><path d="M158.39999999999998 102.1 L162.0 102.1 L160.2 105.3 Z" fill="#111"/><path d="M160.3 117.3 L160.3 122.7" stroke="#111" stroke-width="1" fill="none"/><path d="M73.7 122.7 L203.4 122.7" stroke="#111" stroke-width="1" fill="none"/><path d="M73.7 122.7 L73.7 127.0" stroke="#111" stroke-width="1" fill="none"/><path d="M71.9 125.3 L75.5 125.3 L73.7 128.5 Z" fill="#111"/><path d="M117.0 122.7 L117.0 127.0" stroke="#111" stroke-width="1" fill="none"/><path d="M115.2 125.3 L118.8 125.3 L117.0 128.5 Z" fill="#111"/><path d="M203.4 122.7 L203.4 127.0" stroke="#111" stroke-width="1" fill="none"/><path d="M201.6 125.3 L205.20000000000002 125.3 L203.4 128.5 Z" fill="#111"/><path d="M203.4 140.2 L203.4 145.0" stroke="#111" stroke-width="1" fill="none"/><path d="M152.2 145.0 L216.1 145.0" stroke="#111" stroke-width="1" fill="none"/><path d="M152.2 145.0 L152.2 150.2" stroke="#111" stroke-width="1" fill="none"/><path d="M150.39999999999998 148.5 L154.0 148.5 L152.2 151.7 Z" fill="#111"/><path d="M216.1 145.0 L216.1 150.2" stroke="#111" stroke-width="1" fill="none"/><path d="M214.29999999999998 148.5 L217.9 148.5 L216.1 151.7 Z" fill="#111"/><path d="M216.1 163.7 L216.1 173.5" stroke="#111" stroke-width="1" fill="none"/><path d="M214.29999999999998 171.8 L217.9 171.8 L216.1 175.0 Z" fill="#111"/><path d="M216.1 187.0 L216.1 197.0" stroke="#111" stroke-width="1" fill="none"/><path d="M214.29999999999998 195.3 L217.9 195.3 L216.1 198.5 Z" fill="#111"/></svg>
<div class="a" style="left:97.7px;top:11.7px;width:71.0px;height:12.2px;border:1px solid #222;box-shadow:0.6px 0.6px 0 #999;background:#fff"></div>
<div class="t mono" style="left:97.7px;top:17.20px;width:71.0px;text-align:center;font-size:6.2px;-webkit-text-stroke:0.2px #1c1c3c;color:#1c1c3c;transform:scaleX(1.07);transform-origin:50% 0">compilationUnit</div>
<div class="a" style="left:97.7px;top:35.1px;width:71.0px;height:12.2px;border:1px solid #222;box-shadow:0.6px 0.6px 0 #999;background:#fff"></div>
<div class="t mono" style="left:97.7px;top:40.60px;width:71.0px;text-align:center;font-size:6.2px;-webkit-text-stroke:0.2px #1c1c3c;color:#1c1c3c;transform:scaleX(1.07);transform-origin:50% 0">typeDeclaration</div>
<div class="a" style="left:73.1px;top:58.6px;width:120.1px;height:12.2px;border:1px solid #222;box-shadow:0.6px 0.6px 0 #999;background:#fff"></div>
<div class="t mono" style="left:73.1px;top:64.10px;width:120.1px;text-align:center;font-size:6.2px;-webkit-text-stroke:0.2px #1c1c3c;color:#1c1c3c;transform:scaleX(1.07);transform-origin:50% 0">classOrInterfaceDeclaration</div>
<div class="a" style="left:4.9px;top:81.8px;width:42.6px;height:12.2px;border:1px solid #222;box-shadow:0.6px 0.6px 0 #999;background:#fff"></div>
<div class="t mono" style="left:4.9px;top:87.30px;width:42.6px;text-align:center;font-size:6.2px;-webkit-text-stroke:0.2px #1c1c3c;color:#1c1c3c;transform:scaleX(1.07);transform-origin:50% 0">modifier</div>
<div class="a" style="left:122.8px;top:81.8px;width:74.7px;height:12.2px;border:1px solid #222;box-shadow:0.6px 0.6px 0 #999;background:#fff"></div>
<div class="t mono" style="left:122.8px;top:87.30px;width:74.7px;text-align:center;font-size:6.2px;-webkit-text-stroke:0.2px #1c1c3c;color:#1c1c3c;transform:scaleX(1.07);transform-origin:50% 0">classDeclaration</div>
<div class="a" style="left:9.0px;top:105.3px;width:34.3px;height:12.2px;border:1px solid #222;box-shadow:0.6px 0.6px 0 #999;background:#fff"></div>
<div class="t mono" style="left:9.0px;top:110.80px;width:34.3px;text-align:center;font-size:6.2px;-webkit-text-stroke:0.2px #1c1c3c;color:#1c1c3c;transform:scaleX(1.07);transform-origin:50% 0">public</div>
<div class="a" style="left:111.2px;top:105.3px;width:98.3px;height:12.2px;border:1px solid #222;box-shadow:0.6px 0.6px 0 #999;background:#fff"></div>
<div class="t mono" style="left:111.2px;top:110.80px;width:98.3px;text-align:center;font-size:6.2px;-webkit-text-stroke:0.2px #1c1c3c;color:#1c1c3c;transform:scaleX(1.07);transform-origin:50% 0">normalClassDeclaration</div>
<div class="a" style="left:58.5px;top:128.5px;width:30.5px;height:12.2px;border:1px solid #222;box-shadow:0.6px 0.6px 0 #999;background:#fff"></div>
<div class="t mono" style="left:58.5px;top:134.00px;width:30.5px;text-align:center;font-size:6.2px;-webkit-text-stroke:0.2px #1c1c3c;color:#1c1c3c;transform:scaleX(1.07);transform-origin:50% 0">class</div>
<div class="a" style="left:99.7px;top:128.5px;width:34.7px;height:12.2px;border:1px solid #222;box-shadow:0.6px 0.6px 0 #999;background:#fff"></div>
<div class="t mono" style="left:99.7px;top:134.00px;width:34.7px;text-align:center;font-size:6.2px;-webkit-text-stroke:0.2px #1c1c3c;color:#1c1c3c;transform:scaleX(1.07);transform-origin:50% 0">Sample</div>
<div class="a" style="left:180.1px;top:128.5px;width:46.6px;height:12.2px;border:1px solid #222;box-shadow:0.6px 0.6px 0 #999;background:#fff"></div>
<div class="t mono" style="left:180.1px;top:134.00px;width:46.6px;text-align:center;font-size:6.2px;-webkit-text-stroke:0.2px #1c1c3c;color:#1c1c3c;transform:scaleX(1.07);transform-origin:50% 0">classBody</div>
<div class="a" style="left:145.1px;top:151.7px;width:14.2px;height:12.2px;border:1px solid #222;box-shadow:0.6px 0.6px 0 #999;background:#fff"></div>
<div class="t mono" style="left:145.1px;top:157.20px;width:14.2px;text-align:center;font-size:6.2px;-webkit-text-stroke:0.2px #1c1c3c;color:#1c1c3c;transform:scaleX(1.07);transform-origin:50% 0">{</div>
<div class="a" style="left:170.5px;top:151.7px;width:91.1px;height:12.2px;border:1px solid #222;box-shadow:0.6px 0.6px 0 #999;background:#fff"></div>
<div class="t mono" style="left:170.5px;top:157.20px;width:91.1px;text-align:center;font-size:6.2px;-webkit-text-stroke:0.2px #1c1c3c;color:#1c1c3c;transform:scaleX(1.07);transform-origin:50% 0">classBodyDeclaration</div>
<div class="a" style="left:194.8px;top:175.0px;width:42.5px;height:12.2px;border:1px solid #222;box-shadow:0.6px 0.6px 0 #999;background:#fff"></div>
<div class="t mono" style="left:194.8px;top:180.50px;width:42.5px;text-align:center;font-size:6.2px;-webkit-text-stroke:0.2px #1c1c3c;color:#1c1c3c;transform:scaleX(1.07);transform-origin:50% 0">modifier</div>
<div class="a" style="left:198.9px;top:198.5px;width:34.7px;height:12.2px;border:1px solid #222;box-shadow:0.6px 0.6px 0 #999;background:#fff"></div>
<div class="t mono" style="left:198.9px;top:204.00px;width:34.7px;text-align:center;font-size:6.2px;-webkit-text-stroke:0.2px #1c1c3c;color:#1c1c3c;transform:scaleX(1.07);transform-origin:50% 0">public</div>
</div>
</body></html>
